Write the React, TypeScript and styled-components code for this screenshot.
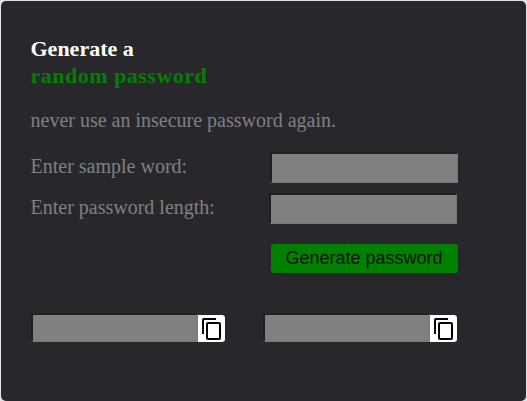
import React from "react";
import styled, { createGlobalStyle } from "styled-components";

const GlobalStyle = createGlobalStyle`
  body {
    margin: 0;
    background: #dfe3e4;
  }
`;

const Card = styled.main`
  box-sizing: border-box;
  width: 525px;
  height: 400px;
  margin: 1px 0 0 1px;
  padding: 34px 68px 0 29.5px;
  border-radius: 5px;
  background: #28282c;
  color: #808080;
  font-family: "Liberation Serif", "Times New Roman", serif;
  font-size: 20px;
`;

const Title = styled.h1`
  margin: 0;
  color: #fff;
  font-size: 22px;
  line-height: 27px;
`;

const Accent = styled.span`
  display: block;
  color: #008000;
  letter-spacing: 0.5px;
`;

const Tagline = styled.p`
  margin: 20px 0 19px;
  line-height: 23px;
  padding-bottom: 1px;
`;

const Field = styled.label<{ $shift?: number }>`
  display: flex;
  justify-content: space-between;
  height: 31px;
  margin-bottom: 10px;
  padding-right: ${(p) => p.$shift ?? 0}px;
  line-height: 28px;
`;

const Input = styled.input`
  box-sizing: border-box;
  width: 188px;
  height: 31px;
  padding: 0 6px;
  border: solid;
  border-width: 2px 1px 1px 2px;
  border-color: #1f1f22 #777 #777 #1f1f22;
  border-radius: 0;
  background: #808080;
  outline: none;
`;

const GenerateButton = styled.button`
  display: block;
  width: 187px;
  height: 29px;
  margin: 20px 0 0 auto;
  padding: 0 1px 0 0;
  border: 0;
  border-radius: 3px;
  background: #008000;
  color: #0a140a;
  font: 18px/29px "Liberation Sans", Arial, sans-serif;
`;

const Results = styled.div`
  display: flex;
  justify-content: space-between;
  margin-top: 40px;
  padding: 0 1px 0 0.5px;
`;

const Result = styled.div`
  display: flex;
  align-items: flex-end;
`;

const Output = styled(Input)`
  width: 167px;
  height: 29px;
`;

const CopyButton = styled.button`
  display: flex;
  align-items: flex-start;
  justify-content: flex-end;
  width: 27px;
  height: 27px;
  padding: 2px 1px 0 0;
  border: 0;
  border-radius: 0 3px 3px 0;
  background: #fff;
  color: #000;
`;

const CopyIcon = () => (
  <svg width="24" height="24" viewBox="0 0 24 24" fill="currentColor">
    <path d="M16 1H4c-1.1 0-2 .9-2 2v14h2V3h12V1zm3 4H8c-1.1 0-2 .9-2 2v14c0 1.1.9 2 2 2h11c1.1 0 2-.9 2-2V7c0-1.1-.9-2-2-2zm0 16H8V7h11v14z" />
  </svg>
);

const CopyableResult = ({ label }: { label: string }) => (
  <Result>
    <Output readOnly aria-label={label} />
    <CopyButton type="button" aria-label="Copy">
      <CopyIcon />
    </CopyButton>
  </Result>
);

export default function App() {
  return (
    <>
      <GlobalStyle />
      <Card>
        <Title>
          Generate a<Accent>random password</Accent>
        </Title>
        <Tagline>never use an insecure password again.</Tagline>
        <Field>
          Enter sample word:
          <Input />
        </Field>
        <Field $shift={1}>
          Enter password length:
          <Input />
        </Field>
        <GenerateButton type="button">Generate password</GenerateButton>
        <Results>
          <CopyableResult label="First password" />
          <CopyableResult label="Second password" />
        </Results>
      </Card>
    </>
  );
}
